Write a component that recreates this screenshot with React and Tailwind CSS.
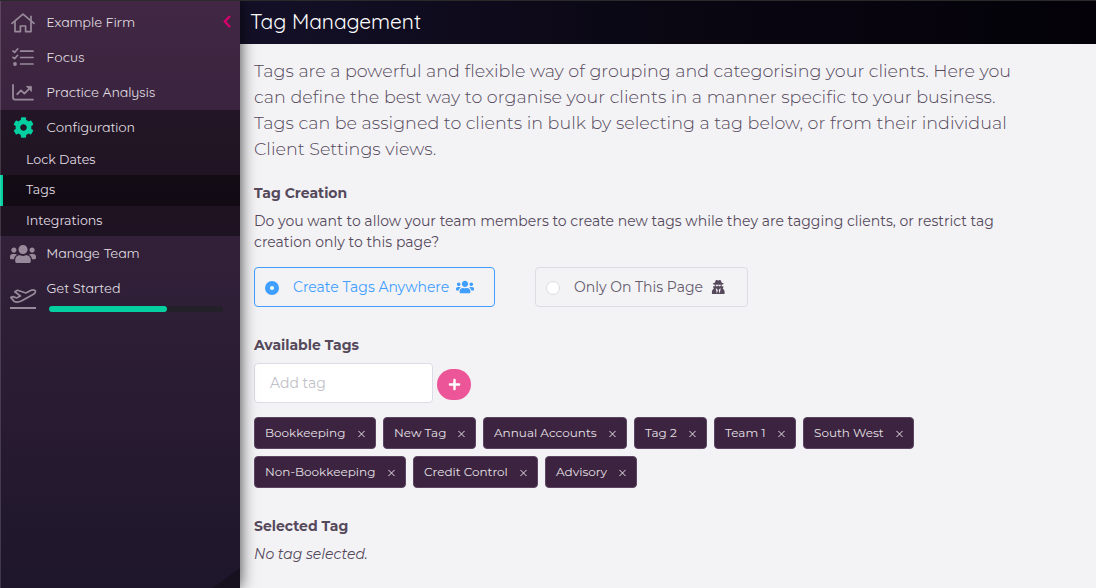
import React from "react";
import { FaCog, FaUsers, FaUserSecret, FaPlus } from "react-icons/fa";

const HomeIcon = () => (
  <svg width="24" height="20" viewBox="0 0 24 20" fill="none" stroke="currentColor" strokeWidth="1.7" strokeLinecap="round" strokeLinejoin="round">
    <path d="M1 10.4 L12 1.2 L23 10.4" />
    <path d="M4 8.5 V18.6 H9.4 V13 H14.6 V18.6 H20 V8.5" />
    <path d="M20 3.4 V7" />
  </svg>
);

const TasksIcon = () => (
  <svg width="22" height="19" viewBox="0 0 22 19" fill="none" stroke="currentColor" strokeWidth="1.7" strokeLinecap="round" strokeLinejoin="round">
    <path d="M8.6 3.2 H21 M8.6 9.5 H21 M8.6 16 H21" />
    <path d="M1 3 L2.6 4.4 L5.6 1 M1 9.3 L2.6 10.7 L5.6 7.3" />
    <circle cx="3" cy="16" r="1.9" fill="currentColor" stroke="none" />
  </svg>
);

const ChartIcon = () => (
  <svg width="22" height="17" viewBox="0 0 22 17" fill="none" stroke="currentColor" strokeWidth="1.8" strokeLinecap="round" strokeLinejoin="round">
    <path d="M1 1 V13.6 Q1 15.6 3 15.6 H21" />
    <path d="M5.2 10.2 L9 6.4 L12.4 9.6 L17.6 4.4" />
    <path d="M14.8 2.4 H19.4 V7 Z" fill="currentColor" strokeWidth="0.9" />
  </svg>
);

const PlaneIcon = () => (
  <svg width="28" height="22" viewBox="0 0 28 22" fill="none" stroke="currentColor" strokeWidth="1.7" strokeLinecap="round" strokeLinejoin="round">
    <path d="M1.8 9.4 L4.2 8.6 L7.6 10 L11.4 8 L5.8 3.8 L8.6 2.2 L16.8 5 L21.6 2.4 Q25.4 1 26.4 3 Q26.8 5 23.6 6.8 L12.8 12.8 Q8.4 15 5.4 13.6 Z" />
    <path d="M1 20 H27" strokeLinecap="butt" strokeWidth="2" />
  </svg>
);

function NavItem({ icon, label }) {
  return (
    <div className="flex h-[35px] items-center">
      <span className="flex w-[46px] shrink-0 justify-center text-[#988a9b]">{icon}</span>
      <span className="pl-[0.6px] font-[Quicksand,Inter,sans-serif] text-[14px] text-[#e6e1e7]">{label}</span>
    </div>
  );
}

function Chip({ label, width }) {
  return (
    <div className={`flex h-8 items-center justify-between rounded-[4px] border border-[#5a4462] bg-[#3c233f] pl-[10px] pr-[10px] text-[12px] text-[#e5e0e6] ${width}`}>
      <span className="whitespace-nowrap">{label}</span>
      <svg width="7" height="8" viewBox="0 0 7 8" stroke="currentColor" strokeWidth="1" className="mt-px shrink-0">
        <path d="M0.4 0.9 L6.6 7.1 M6.6 0.9 L0.4 7.1" />
      </svg>
    </div>
  );
}

const rows = [
  [
    { label: "Bookkeeping", width: "w-[122px]" },
    { label: "New Tag", width: "w-[93px]" },
    { label: "Annual Accounts", width: "w-[144px]" },
    { label: "Tag 2", width: "w-[73px]" },
    { label: "Team 1", width: "w-[82px]" },
    { label: "South West", width: "w-[111px]" },
  ],
  [
    { label: "Non-Bookkeeping", width: "w-[152px]" },
    { label: "Credit Control", width: "w-[125px]" },
    { label: "Advisory", width: "w-[92px]" },
  ],
];

const Heading = ({ children }) => <h2 className="text-[14px] leading-[21px] font-bold">{children}</h2>;

export default function App() {
  return (
    <div className="flex h-[588px] w-[1096px] flex-col overflow-hidden border-t border-[#2a2a2b] bg-[#f3f3f6] font-[Montserrat,Inter,sans-serif] text-[#55495b]">
      <div className="flex min-h-0 flex-1">
        <aside className="relative z-10 flex w-[240px] shrink-0 flex-col bg-linear-to-b from-[#412743] to-[#1e162b] pt-1 shadow-[0_0_15px_rgba(0,0,0,0.75)]">
          <div className="flex items-center">
            <NavItem icon={<HomeIcon />} label="Example Firm" />
            <svg width="8" height="13" viewBox="0 0 8 13" fill="none" stroke="#d6006c" strokeWidth="2.4" className="mr-[9px] mb-[2px] ml-auto">
              <path d="M7 1 L1.8 6.5 L7 12" />
            </svg>
          </div>
          <NavItem icon={<TasksIcon />} label="Focus" />
          <NavItem icon={<ChartIcon />} label="Practice Analysis" />
          <div className="bg-black/40 text-[12.6px] text-[#e0dbe2]">
            <NavItem icon={<FaCog className="size-[21px] text-[#04cfa1]" />} label="Configuration" />
            <div className="flex h-[30px] items-center pl-[26px]">Lock Dates</div>
            <div className="flex h-[31px] items-center border-l-3 border-[#04cfa1] bg-black/40 pl-[23px]">Tags</div>
            <div className="flex h-[30px] items-center pl-[26px]">Integrations</div>
          </div>
          <NavItem icon={<FaUsers className="size-[26px]" />} label="Manage Team" />
          <div className="flex">
            <span className="flex w-[46px] shrink-0 justify-center pt-[17px] text-[#988a9b]"><PlaneIcon /></span>
            <div className="flex flex-col">
              <span className="flex h-[35px] items-center pl-[0.6px] font-[Quicksand,Inter,sans-serif] text-[14px] text-[#e6e1e7]">Get Started</span>
              <div className="ml-[3px] h-[6px] w-[174px] rounded-full bg-[#23202a]">
                <div className="h-full w-[118px] rounded-full bg-[#04cfa1]" />
              </div>
            </div>
          </div>
          <svg width="27" height="20" viewBox="0 0 27 20" className="mt-auto ml-auto">
            <path d="M0 20 L27 0 V20 Z" fill="#17111f" />
          </svg>
          <div className="absolute inset-y-0 left-0 w-px bg-white/15" />
        </aside>
        <div className="flex min-w-0 flex-1 flex-col">
          <header className="flex h-[43px] items-center bg-linear-to-r from-[#141028] via-[#0a0713] to-[#040208] pb-[2px] pl-[10px]">
            <h1 className="font-[Quicksand,Inter,sans-serif] text-[20.9px] text-white">Tag Management</h1>
          </header>
          <main className="flex flex-col pt-[14px] pl-[14px]">
            <p className="text-[17.52px] leading-[26px] font-light whitespace-nowrap">
              Tags are a powerful and flexible way of grouping and categorising your clients. Here you<br />
              <span className="tracking-[0.04px]">can define the best way to organise your clients in a manner specific to your business.</span><br />
              <span className="tracking-[0.015px]">Tags can be assigned to clients in bulk by selecting a tag below, or from their individual</span><br />
              Client Settings views.
            </p>
            <div className="mt-[21px]"><Heading>Tag Creation</Heading></div>
            <p className="mt-[7px] text-[14px] leading-[21px] tracking-[0.01px] whitespace-nowrap">
              Do you want to allow your team members to create new tags while they are tagging clients, or restrict tag<br />
              creation only to this page?
            </p>
            <div className="mt-[14px] flex gap-10 text-[14px]">
              <div className="flex h-10 w-[241px] items-center rounded-[4px] border border-[#409eff] pl-[10px] text-[#409eff]">
                <span className="mt-px flex size-[14px] items-center justify-center rounded-full bg-[#409eff]">
                  <span className="size-1 rounded-full bg-white" />
                </span>
                <span className="ml-[14px] whitespace-nowrap">Create Tags Anywhere</span>
                <FaUsers className="ml-[7px] size-[18px]" />
              </div>
              <div className="flex h-10 w-[213px] items-center rounded-[4px] border border-[#dcdce3] pl-[10px]">
                <span className="mt-px size-[14px] rounded-full border border-[#dcdce3] bg-white" />
                <span className="ml-[14px] whitespace-nowrap text-[#665b6c]">Only On This Page</span>
                <FaUserSecret className="ml-[8px] size-[14.5px]" />
              </div>
            </div>
            <div className="mt-[28px]"><Heading>Available Tags</Heading></div>
            <div className="mt-[7px] flex items-center gap-1">
              <div className="flex h-10 w-[179px] items-center rounded-[4px] border border-[#dcdce6] bg-white pl-[15px] text-[14px] text-[#c0c0c8]">Add tag</div>
              <div className="mt-[3px] flex h-[31px] w-[34px] items-center justify-center rounded-full bg-[#ec5598] pb-px text-white">
                <FaPlus className="size-[13px]" />
              </div>
            </div>
            <div className="mt-[14px] flex flex-col gap-[7px]">
              {rows.map((row, i) => (
                <div key={i} className="flex gap-[7px]">
                  {row.map((c) => <Chip key={c.label} {...c} />)}
                </div>
              ))}
            </div>
            <div className="mt-[28px]"><Heading>Selected Tag</Heading></div>
            <p className="mt-[7px] text-[14px] leading-[21px] italic">No tag selected.</p>
          </main>
        </div>
      </div>
    </div>
  );
}
